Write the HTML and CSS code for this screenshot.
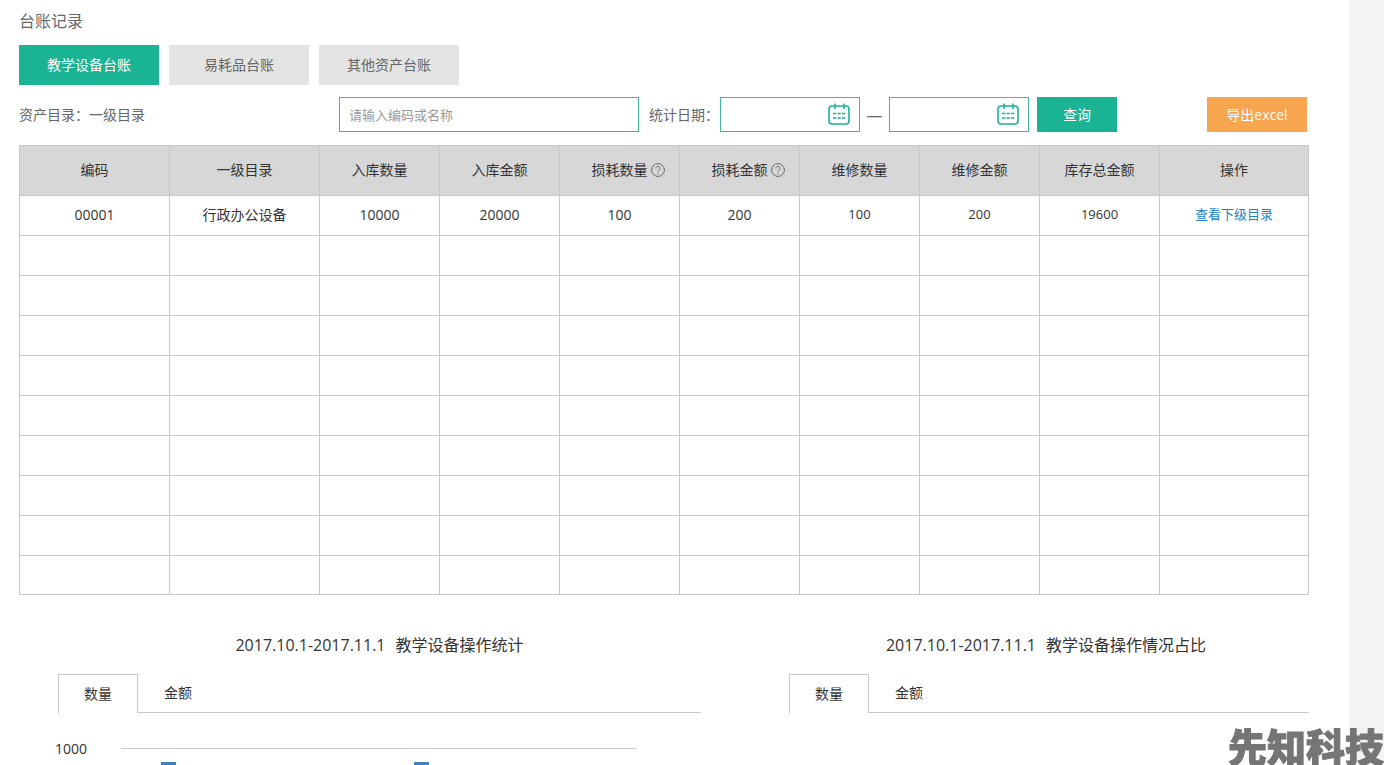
FILE: index.html
```html
<!DOCTYPE html>
<html lang="zh-CN">

<head>
    <meta charset="UTF-8">
    <meta name="viewport" content="width=device-width, initial-scale=1.0">
    <title>台账记录</title>
    <link rel="stylesheet" href="styles.css">
</head>

<body>
    <div class="content">
        <h1 class="page-title">台账记录</h1>

        <!-- 台账分类 -->
        <div class="type-tabs">
            <button type="button" class="type-tab active">教学设备台账</button>
            <button type="button" class="type-tab">易耗品台账</button>
            <button type="button" class="type-tab">其他资产台账</button>
        </div>

        <!-- 查询条件 -->
        <form class="toolbar">
            <p class="catalog">资产目录：一级目录</p>
            <input type="text" class="search-input" placeholder="请输入编码或名称" aria-label="编码或名称">
            <label class="date-label" for="date-start">统计日期：</label>
            <div class="date-box">
                <input type="text" id="date-start">
                <svg class="icon-date" viewBox="0 0 24 24">
                    <rect x="2" y="4" width="20" height="18" rx="3" />
                    <path d="M8 1.500v5.500M17 1.500v5.500" />
                    <path class="days" d="M6 11.500h3.300M10.500 11.500h3.300M15 11.500h3.300M6 16h3.300M10.500 16h3.300M15 16h3.300" />
                </svg>
            </div>
            <span class="dash">—</span>
            <div class="date-box">
                <input type="text" id="date-end" aria-label="结束日期">
                <svg class="icon-date" viewBox="0 0 24 24">
                    <rect x="2" y="4" width="20" height="18" rx="3" />
                    <path d="M8 1.500v5.500M17 1.500v5.500" />
                    <path class="days" d="M6 11.500h3.300M10.500 11.500h3.300M15 11.500h3.300M6 16h3.300M10.500 16h3.300M15 16h3.300" />
                </svg>
            </div>
            <button type="button" class="btn-query">查询</button>
            <button type="button" class="btn-export">导出excel</button>
        </form>

        <!-- 台账列表 -->
        <table class="ledger">
            <colgroup>
                <col class="col-wide">
                <col class="col-wide">
                <col span="7">
                <col class="col-action">
            </colgroup>
            <thead>
                <tr>
                    <th>编码</th>
                    <th>一级目录</th>
                    <th>入库数量</th>
                    <th>入库金额</th>
                    <th>损耗数量<svg class="icon-help" viewBox="0 0 14 14"><circle cx="7" cy="7" r="6.400" /><path d="M4.900 5.400c0-1.300 1-2 2.100-2s2.100.7 2.100 1.900c0 1.400-2 1.600-2 3.100M7.100 9.800v1.200" /></svg></th>
                    <th>损耗金额<svg class="icon-help" viewBox="0 0 14 14"><circle cx="7" cy="7" r="6.400" /><path d="M4.900 5.400c0-1.300 1-2 2.100-2s2.100.7 2.100 1.900c0 1.400-2 1.600-2 3.100M7.100 9.800v1.200" /></svg></th>
                    <th>维修数量</th>
                    <th>维修金额</th>
                    <th>库存总金额</th>
                    <th>操作</th>
                </tr>
            </thead>
            <tbody>
                <tr>
                    <td>00001</td>
                    <td>行政办公设备</td>
                    <td>10000</td>
                    <td>20000</td>
                    <td>100</td>
                    <td>200</td>
                    <td class="small">100</td>
                    <td class="small">200</td>
                    <td class="small">19600</td>
                    <td class="small"><a href="#">查看下级目录</a></td>
                </tr>
                <tr><td></td><td></td><td></td><td></td><td></td><td></td><td></td><td></td><td></td><td></td></tr>
                <tr><td></td><td></td><td></td><td></td><td></td><td></td><td></td><td></td><td></td><td></td></tr>
                <tr><td></td><td></td><td></td><td></td><td></td><td></td><td></td><td></td><td></td><td></td></tr>
                <tr><td></td><td></td><td></td><td></td><td></td><td></td><td></td><td></td><td></td><td></td></tr>
                <tr><td></td><td></td><td></td><td></td><td></td><td></td><td></td><td></td><td></td><td></td></tr>
                <tr><td></td><td></td><td></td><td></td><td></td><td></td><td></td><td></td><td></td><td></td></tr>
                <tr><td></td><td></td><td></td><td></td><td></td><td></td><td></td><td></td><td></td><td></td></tr>
                <tr><td></td><td></td><td></td><td></td><td></td><td></td><td></td><td></td><td></td><td></td></tr>
                <tr><td></td><td></td><td></td><td></td><td></td><td></td><td></td><td></td><td></td><td></td></tr>
            </tbody>
        </table>

        <!-- 统计图表 -->
        <div class="charts">
            <section class="chart-left">
                <h2 class="chart-title"><span>2017.10.1-2017.11.1</span><span>教学设备操作统计</span></h2>
                <div class="chart-tabs">
                    <button type="button" class="chart-tab active">数量</button>
                    <button type="button" class="chart-tab">金额</button>
                </div>
                <div class="chart">
                    <span class="axis-label">1000</span>
                    <div class="plot">
                        <div class="bar"></div>
                        <div class="bar"></div>
                    </div>
                </div>
            </section>
            <section class="chart-right">
                <h2 class="chart-title"><span>2017.10.1-2017.11.1</span><span>教学设备操作情况占比</span></h2>
                <div class="chart-tabs">
                    <button type="button" class="chart-tab active">数量</button>
                    <button type="button" class="chart-tab">金额</button>
                </div>
            </section>
        </div>
    </div>
    <div class="brand">先知科技</div>
</body>

</html>
```

FILE: styles.css
```css
* {
    box-sizing: border-box;
}

body {
    margin: 0;
    height: 100vh;
    overflow: hidden;
    padding-right: 35px;
    background-color: #f3f3f5;
    color: #333;
    font-family: "Open Sans", "Noto Sans CJK SC", sans-serif;
    font-size: 14px;
    line-height: 20px;
}

button,
input {
    font-family: inherit;
    font-size: 14px;
    line-height: 20px;
}

button {
    padding: 0;
    border: none;
    cursor: pointer;
}

.content {
    height: 100%;
    overflow: hidden;
    padding: 9px 40px 0 19px;
    background-color: white;
}

.page-title {
    margin: 0 0 12px;
    color: #666;
    font-size: 16px;
    font-weight: normal;
    line-height: 24px;
}

.type-tabs {
    display: flex;
    gap: 10px;
}

.type-tab {
    width: 140px;
    height: 40px;
    background-color: #e4e4e4;
    color: #666;
}

.type-tab.active,
.btn-query {
    background-color: #1ab394;
    color: white;
}

/* 查询条件 */

.toolbar {
    display: flex;
    align-items: center;
    margin: 12px 0 13px;
    padding-right: 2px;
    color: #666;
}

.catalog {
    width: 320px;
    margin: 0;
}

.toolbar input {
    height: 35px;
    padding: 0 9px;
    border: solid 1px #43b59c;
    background-color: white;
    outline: none;
}

.toolbar .search-input {
    width: 300px;
    font-size: 13px;
}

.search-input::placeholder {
    color: #999;
}

.date-label {
    width: 71px;
    margin-left: 10px;
    white-space: nowrap;
}

.date-box {
    position: relative;
    width: 140px;
}

.date-box input {
    display: block;
    width: 100%;
    padding-right: 34px;
}

.icon-date {
    position: absolute;
    top: 5px;
    right: 9px;
    width: 24px;
    height: 24px;
    fill: none;
    stroke: #1ab394;
    stroke-width: 1.6;
}

.icon-date .days {
    stroke-width: 1.5;
}

.dash {
    width: 29px;
    font-size: 16px;
    text-align: center;
}

.btn-query {
    width: 80px;
    height: 35px;
    margin-left: 8px;
}

.btn-export {
    width: 100px;
    height: 35px;
    margin-left: auto;
    background-color: #f8a54f;
    color: white;
}

/* 台账列表 */

.ledger {
    width: 100%;
    table-layout: fixed;
    border-collapse: collapse;
    text-align: center;
}

.col-wide {
    width: 150px;
}

.col-action {
    width: 149px;
}

.ledger th,
.ledger td {
    height: 40px;
    padding: 0 0 2px;
    border: solid 1px #c9c9c9;
}

.ledger th {
    height: 50px;
    background-color: #d7d7d7;
    font-weight: normal;
}

.ledger tr:last-child td {
    height: 39px;
}

.ledger .small {
    padding-bottom: 4px;
    font-size: 13px;
}

.ledger a {
    color: #1d84c6;
    text-decoration: none;
}

.icon-help {
    width: 14px;
    height: 14px;
    margin: 0 -17px 0 3px;
    vertical-align: -2px;
    fill: none;
    stroke: #666;
}

/* 统计图表 */

.charts {
    display: flex;
    gap: 88px;
    padding: 38px 0 0 39px;
}

.chart-left {
    flex: 643;
}

.chart-right {
    flex: 520;
}

.chart-title {
    display: flex;
    justify-content: center;
    gap: 10px;
    margin: 0 0 17px;
    font-size: 16px;
    font-weight: normal;
    line-height: 24px;
}

.chart-right .chart-title {
    padding-right: 6px;
}

.chart-tabs {
    display: flex;
    border-bottom: solid 1px #c9c9c9;
}

.chart-tab {
    width: 80px;
    height: 38px;
    background-color: white;
    color: #333;
}

.chart-tab.active {
    height: 39px;
    margin-bottom: -1px;
    border: solid 1px #c9c9c9;
    border-bottom: none;
}

.chart {
    display: flex;
    align-items: flex-start;
    margin: 26px 64px 0 -3px;
}

.axis-label {
    width: 66px;
}

.plot {
    display: flex;
    flex: 1;
    gap: 238px;
    height: 300px;
    margin-top: 9px;
    padding: 13px 0 0 40px;
    border-top: solid 1px #c9c9c9;
}

.bar {
    width: 15px;
    background-color: #4180c2;
}

.brand {
    position: fixed;
    right: 0;
    bottom: 0;
    color: #757575;
    font-family: "Noto Sans CJK SC", sans-serif;
    font-size: 39px;
    font-weight: 900;
    line-height: 39px;
    white-space: nowrap;
    -webkit-text-stroke: 1px #757575;
}
```
